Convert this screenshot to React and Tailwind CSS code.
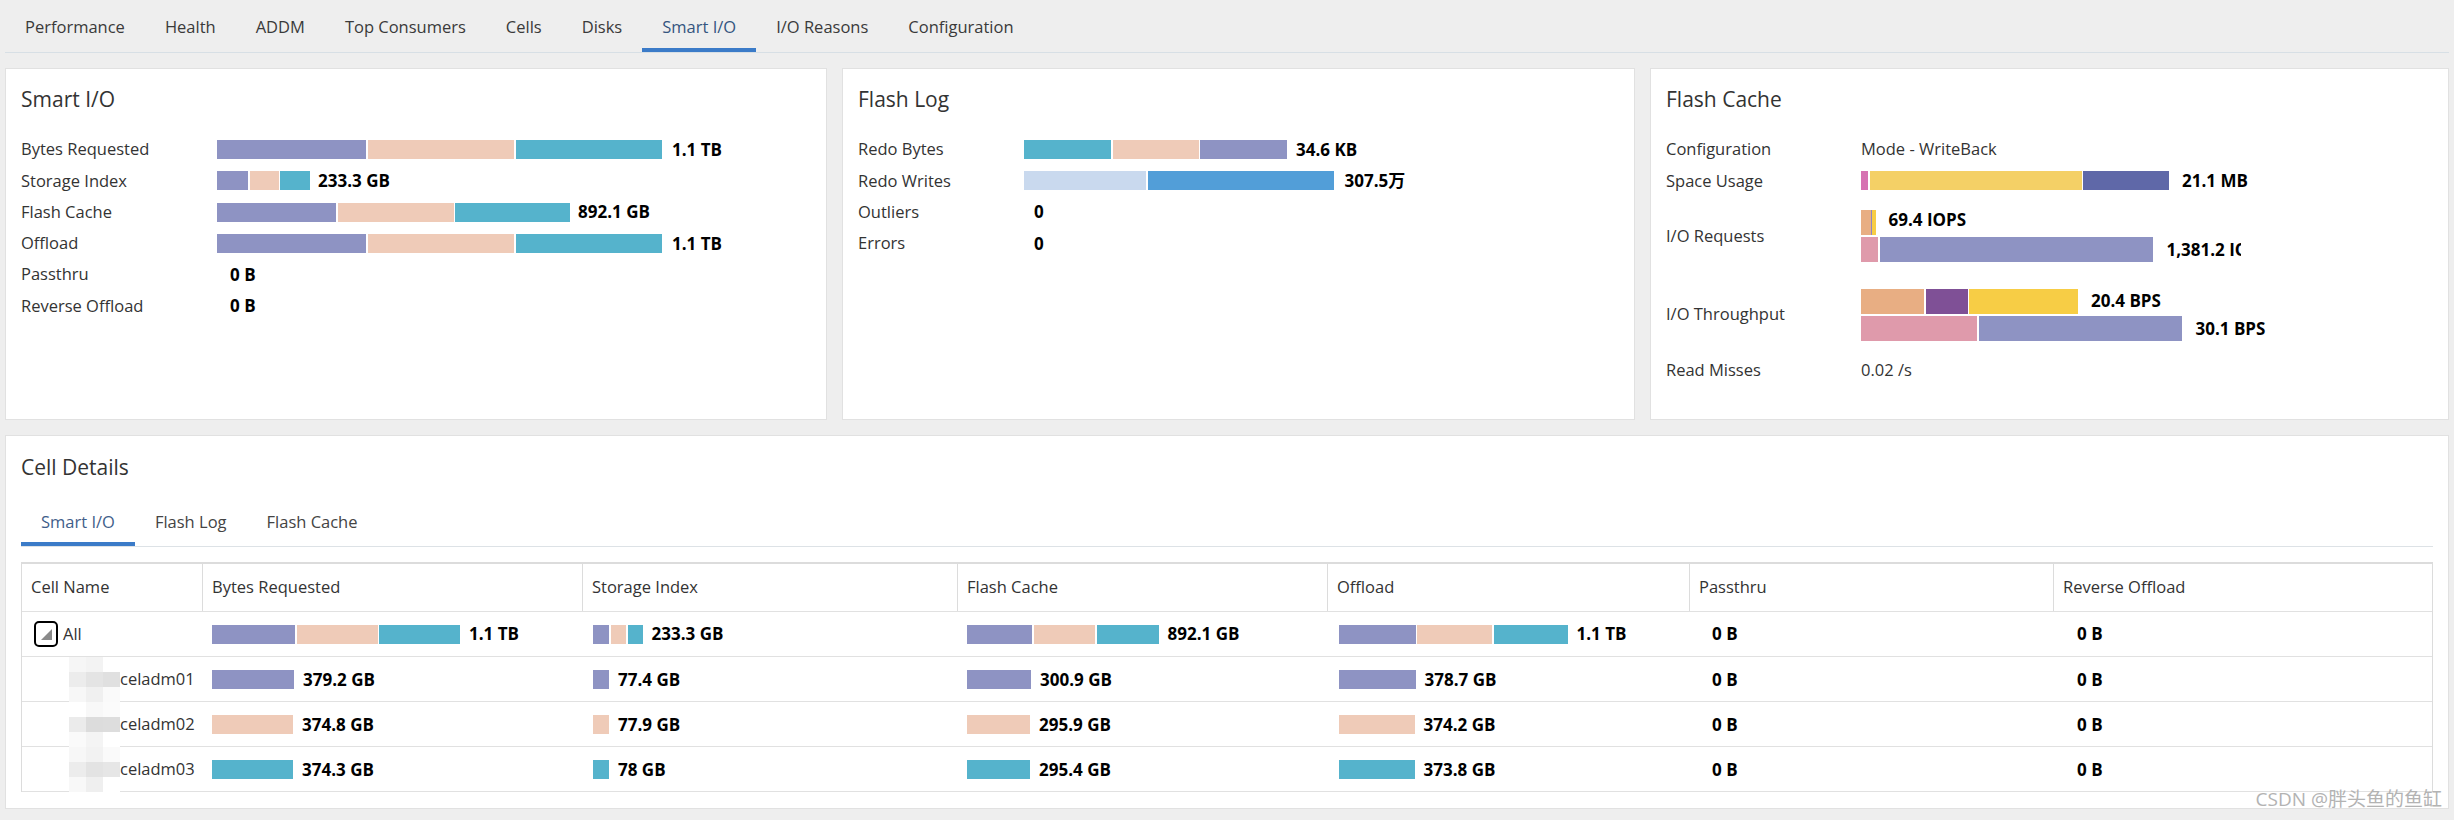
import React from 'react';

const topTabs = ['Performance', 'Health', 'ADDM', 'Top Consumers', 'Cells', 'Disks', 'Smart I/O', 'I/O Reasons', 'Configuration'];

const PURPLE = 'bg-[#8e93c3]';
const PEACH = 'bg-[#efcbb8]';
const TEAL = 'bg-[#55b3cc]';

// Horizontal stacked bar, widths come from data
const Bar = ({ segs, h = 'h-[19px]', gap = 'gap-[1.5px]' }) => (
  <div className={`flex shrink-0 ${gap} ${h}`}>
    {segs.map((s, i) => (
      <div key={i} className={`h-full shrink-0 ${s.c}`} style={{ width: s.w }} />
    ))}
  </div>
);

const Value = ({ children, className = 'ml-[9px]' }) => (
  <span className={`font-bold text-[17px] text-black whitespace-nowrap ${className}`}>{children}</span>
);

const Metric = ({ label, labelW, className = 'h-[31.3px]', children }) => (
  <div className={`flex items-center ${className}`}>
    <div className={`shrink-0 ${labelW}`}>{label}</div>
    <div className="flex items-center">{children}</div>
  </div>
);

const Panel = ({ title, className, children }) => (
  <div className={`bg-white border border-[#e1e1e1] pl-[15px] pt-4 ${className}`}>
    <h2 className="text-[21px] leading-[29px] text-[#333]">{title}</h2>
    <div className="mt-[20px]">{children}</div>
  </div>
);

const SmartIOPanel = () => {
  const w = 'w-[196px]';
  return (
    <Panel title="Smart I/O" className="w-[822px] shrink-0">
      <Metric label="Bytes Requested" labelW={w}>
        <Bar gap="gap-[2px]" segs={[{ w: 149, c: PURPLE }, { w: 146, c: PEACH }, { w: 146, c: TEAL }]} />
        <Value className="ml-[10px]">1.1 TB</Value>
      </Metric>
      <Metric label="Storage Index" labelW={w}>
        <Bar segs={[{ w: 31, c: PURPLE }, { w: 29, c: PEACH }, { w: 30, c: TEAL }]} />
        <Value className="ml-[8px]">233.3 GB</Value>
      </Metric>
      <Metric label="Flash Cache" labelW={w}>
        <Bar segs={[{ w: 119, c: PURPLE }, { w: 116, c: PEACH }, { w: 115, c: TEAL }]} />
        <Value className="ml-[8px]">892.1 GB</Value>
      </Metric>
      <Metric label="Offload" labelW={w}>
        <Bar gap="gap-[2px]" segs={[{ w: 149, c: PURPLE }, { w: 146, c: PEACH }, { w: 146, c: TEAL }]} />
        <Value className="ml-[10px]">1.1 TB</Value>
      </Metric>
      <Metric label="Passthru" labelW={w}>
        <Value className="ml-[13px]">0 B</Value>
      </Metric>
      <Metric label="Reverse Offload" labelW={w}>
        <Value className="ml-[13px]">0 B</Value>
      </Metric>
    </Panel>
  );
};

const FlashLogPanel = () => {
  const w = 'w-[166px]';
  return (
    <Panel title="Flash Log" className="w-[793px] shrink-0">
      <Metric label="Redo Bytes" labelW={w}>
        <Bar segs={[{ w: 87, c: TEAL }, { w: 86, c: PEACH }, { w: 87, c: PURPLE }]} />
        <Value>34.6 KB</Value>
      </Metric>
      <Metric label="Redo Writes" labelW={w}>
        <Bar segs={[{ w: 122, c: 'bg-[#c9d9ee]' }, { w: 186, c: 'bg-[#529ed8]' }]} />
        <Value className="ml-[11px]">307.5万</Value>
      </Metric>
      <Metric label="Outliers" labelW={w}>
        <Value className="ml-[10px]">0</Value>
      </Metric>
      <Metric label="Errors" labelW={w}>
        <Value className="ml-[10px]">0</Value>
      </Metric>
    </Panel>
  );
};

const FlashCachePanel = () => {
  const w = 'w-[195px]';
  return (
    <Panel title="Flash Cache" className="flex-1">
      <Metric label="Configuration" labelW={w}>
        <span>Mode - WriteBack</span>
      </Metric>
      <Metric label="Space Usage" labelW={w}>
        <Bar segs={[{ w: 7, c: 'bg-[#d672b2]' }, { w: 212, c: 'bg-[#f4d066]' }, { w: 86, c: 'bg-[#5f68a8]' }]} />
        <Value className="ml-[13px]">21.1 MB</Value>
      </Metric>
      <Metric label="I/O Requests" labelW={w} className="py-[13px]">
        <div className="flex flex-col gap-[2px]">
          <div className="flex items-center">
            <Bar h="h-[25px]" gap="gap-0" segs={[{ w: 9.5, c: 'bg-[#e8ae83]' }, { w: 1, c: 'bg-[#8f86c0]' }, { w: 4, c: 'bg-[#f7cd45]' }]} />
            <Value className="ml-[13px] -mt-[4px]">69.4 IOPS</Value>
          </div>
          <div className="flex items-center">
            <Bar h="h-[25px]" segs={[{ w: 17, c: 'bg-[#df9aab]' }, { w: 273, c: PURPLE }]} />
            {/* value is clipped by its column in the original */}
            <span className="ml-[14px] w-[74px] overflow-hidden">
              <Value className="">1,381.2 IOPS</Value>
            </span>
          </div>
        </div>
      </Metric>
      <Metric label="I/O Throughput" labelW={w} className="py-[13px]">
        <div className="flex flex-col gap-[2px]">
          <div className="flex items-center">
            <Bar h="h-[25px]" segs={[{ w: 63, c: 'bg-[#e8ae83]' }, { w: 42, c: 'bg-[#7f5096]' }, { w: 109, c: 'bg-[#f7cd45]' }]} />
            <Value className="ml-[13px]">20.4 BPS</Value>
          </div>
          <div className="flex items-center">
            <Bar h="h-[25px]" segs={[{ w: 116, c: 'bg-[#df9aab]' }, { w: 203, c: PURPLE }]} />
            <Value className="ml-[14px]">30.1 BPS</Value>
          </div>
        </div>
      </Metric>
      <Metric label="Read Misses" labelW={w}>
        <span>0.02 /s</span>
      </Metric>
    </Panel>
  );
};

const cols = 'grid grid-cols-[181px_380px_375px_370px_362px_364px_1fr]';
const headers = ['Cell Name', 'Bytes Requested', 'Storage Index', 'Flash Cache', 'Offload', 'Passthru', 'Reverse Offload'];

const rows = [
  {
    name: 'All',
    bytes: { segs: [{ w: 83, c: PURPLE }, { w: 81, c: PEACH }, { w: 81, c: TEAL }], v: '1.1 TB' },
    storage: { segs: [{ w: 16.5, c: PURPLE }, { w: 15.5, c: PEACH }, { w: 15, c: TEAL }], v: '233.3 GB' },
    flash: { segs: [{ w: 65, c: PURPLE }, { w: 61.5, c: PEACH }, { w: 62, c: TEAL }], v: '892.1 GB' },
    offload: { segs: [{ w: 76.5, c: PURPLE }, { w: 75, c: PEACH }, { w: 74, c: TEAL }], v: '1.1 TB' },
  },
  {
    name: 'celadm01',
    mosaic: ['bg-[#f6f6f6]', 'bg-[#f3f3f3]', 'bg-white', 'bg-[#ececec]', 'bg-[#e4e4e4]', 'bg-[#e0e0e0]', 'bg-[#f7f7f7]', 'bg-[#f0f0f0]', 'bg-[#fafafa]'],
    bytes: { segs: [{ w: 82, c: PURPLE }], v: '379.2 GB' },
    storage: { segs: [{ w: 16.5, c: PURPLE }], v: '77.4 GB' },
    flash: { segs: [{ w: 64, c: PURPLE }], v: '300.9 GB' },
    offload: { segs: [{ w: 76.5, c: PURPLE }], v: '378.7 GB' },
  },
  {
    name: 'celadm02',
    mosaic: ['bg-white', 'bg-[#f8f8f8]', 'bg-[#fbfbfb]', 'bg-[#ebebeb]', 'bg-[#dcdcdc]', 'bg-[#dddddd]', 'bg-[#fafafa]', 'bg-[#f4f4f4]', 'bg-white'],
    bytes: { segs: [{ w: 81, c: PEACH }], v: '374.8 GB' },
    storage: { segs: [{ w: 16.5, c: PEACH }], v: '77.9 GB' },
    flash: { segs: [{ w: 63, c: PEACH }], v: '295.9 GB' },
    offload: { segs: [{ w: 75.5, c: PEACH }], v: '374.2 GB' },
  },
  {
    name: 'celadm03',
    mosaic: ['bg-[#f7f7f7]', 'bg-[#f2f2f2]', 'bg-[#fafafa]', 'bg-[#ececec]', 'bg-[#e3e3e3]', 'bg-[#e6e6e6]', 'bg-[#f8f8f8]', 'bg-[#efefef]', 'bg-white'],
    bytes: { segs: [{ w: 81, c: TEAL }], v: '374.3 GB' },
    storage: { segs: [{ w: 16.5, c: TEAL }], v: '78 GB' },
    flash: { segs: [{ w: 63, c: TEAL }], v: '295.4 GB' },
    offload: { segs: [{ w: 75.5, c: TEAL }], v: '373.8 GB' },
  },
];

const BarCell = ({ d, className = 'pl-[9px]' }) => (
  <div className={`flex items-center ${className}`}>
    <Bar segs={d.segs} />
    <Value>{d.v}</Value>
  </div>
);

const ExpandIcon = () => (
  <span className="w-[24px] h-[26px] border-2 border-black rounded-[5px] flex items-center justify-center shrink-0">
    <svg width="14" height="14" viewBox="0 0 14 14">
      <polygon points="2,13 13,13 13,2" fill="#8a8a8a" />
    </svg>
  </span>
);

const CellDetails = () => (
  <div className="mt-[15px] bg-white border border-[#e1e1e1] pt-[17px] pb-[16px] px-[15px]">
    <h2 className="text-[21px] leading-[29px] text-[#333]">Cell Details</h2>
    <div className="mt-[19px] flex border-b border-[#dde2e6]">
      {['Smart I/O', 'Flash Log', 'Flash Cache'].map((t, i) => (
        <div
          key={t}
          className={`h-[45px] pt-[2px] px-5 flex items-center border-b-4 ${i === 0 ? 'border-[#3b7bc8] text-[#3f5e8a]' : 'border-transparent text-[#444]'}`}
        >
          {t}
        </div>
      ))}
    </div>

    <div className="mt-[15px] border-t-2 border-x border-[#dcdcdc]">
      <div className={`${cols} h-[48px] border-b border-[#e1e1e1]`}>
        {headers.map((h, i) => (
          <div key={h} className={`flex items-center pl-[9px] ${i < headers.length - 1 ? 'border-r border-[#dcdcdc]' : ''}`}>
            {h}
          </div>
        ))}
      </div>
      {rows.map((r) => (
        <div key={r.name} className={`${cols} h-[45px] border-b border-[#e1e1e1]`}>
          {r.mosaic ? (
            <div className="flex items-center pl-[47px]">
              <div className="grid grid-cols-3 w-[51px] h-[45px] shrink-0">
                {r.mosaic.map((m, i) => (
                  <div key={i} className={m} />
                ))}
              </div>
              <span>{r.name}</span>
            </div>
          ) : (
            <div className="flex items-center pl-[12px]">
              <ExpandIcon />
              <span className="ml-[5px]">{r.name}</span>
            </div>
          )}
          <BarCell d={r.bytes} />
          <BarCell d={r.storage} className="pl-[9.5px]" />
          <BarCell d={r.flash} />
          <BarCell d={r.offload} className="pl-[11px]" />
          <div className="flex items-center pl-[22px]"><Value className="">0 B</Value></div>
          <div className="flex items-center pl-[23px]"><Value className="">0 B</Value></div>
        </div>
      ))}
    </div>
  </div>
);

export default function App() {
  return (
    <div className="relative min-h-screen bg-[#eeeeee] px-[5px] text-[16.5px] text-[#333] font-['Open_Sans','Noto_Sans_CJK_SC',sans-serif]">
      {/* Top tabs */}
      <div className="flex border-b border-[#d7dfe5]">
        {topTabs.map((t) => (
          <div
            key={t}
            className={`h-[52px] pt-[6px] px-5 flex items-center border-b-4 ${t === 'Smart I/O' ? 'border-[#3b7bc8] text-[#34557f]' : 'border-transparent text-[#3a3a3a]'}`}
          >
            {t}
          </div>
        ))}
      </div>

      {/* Summary panels */}
      <div className="mt-[15px] flex gap-[15px] h-[352px]">
        <SmartIOPanel />
        <FlashLogPanel />
        <FlashCachePanel />
      </div>

      <CellDetails />

      <div className="absolute right-[12px] bottom-[7px] text-[19px] text-[#b3b3b3]">
        CSDN @胖头鱼的鱼缸
      </div>
    </div>
  );
}
